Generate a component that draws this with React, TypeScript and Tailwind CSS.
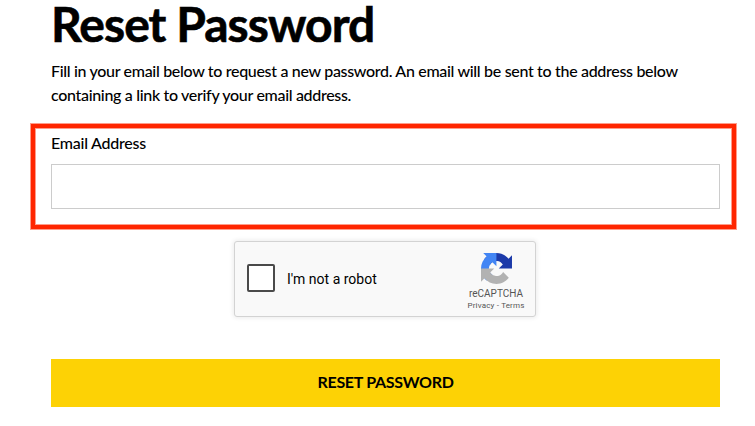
import { useState } from 'react'

function RecaptchaLogo() {
  return (
    <svg viewBox="0 0 64 64" className="h-[31px] w-[31px]" aria-hidden="true">
      <path
        fill="#1c3aa9"
        d="M64 31.955l-.033-1.37V4.687l-7.16 7.16C50.948 4.674 42.033.093 32.05.093c-10.4 0-19.622 4.96-25.458 12.64l11.736 11.86a15.55 15.55 0 0 1 4.754-5.334c2.05-1.6 4.952-2.906 8.968-2.906.485 0 .86.057 1.135.163 4.976.393 9.288 3.14 11.828 7.124l-8.307 8.307L64 31.953"
      />
      <path
        fill="#4285f4"
        d="M31.862.094l-1.37.033H4.594l7.16 7.16C4.58 13.147 0 22.06 0 32.046c0 10.4 4.96 19.622 12.64 25.458L24.5 45.768a15.55 15.55 0 0 1-5.334-4.754c-1.6-2.05-2.906-4.952-2.906-8.968 0-.485.057-.86.163-1.135.393-4.976 3.14-9.288 7.124-11.828l8.307 8.307L31.86.095"
      />
      <path
        fill="#b2b2b2"
        d="M.001 32.045l.033 1.37v25.898l7.16-7.16c5.86 7.173 14.774 11.754 24.76 11.754 10.4 0 19.622-4.96 25.458-12.64l-11.736-11.86a15.55 15.55 0 0 1-4.754 5.334c-2.05 1.6-4.952 2.906-8.968 2.906-.485 0-.86-.057-1.135-.163-4.976-.393-9.288-3.14-11.828-7.124l8.307-8.307c-10.522.04-22.4.066-27.295-.005"
      />
    </svg>
  )
}

function Recaptcha() {
  return (
    <div className="mt-3 ml-[234px] flex h-[76px] w-[302px] justify-between rounded-[3px] border border-[#d3d3d3] bg-[#f9f9f9] font-['Roboto',sans-serif] shadow-[0_0_4px_1px_rgba(0,0,0,0.08)]">
      <label className="flex items-start pt-[22px] pl-3">
        <input type="checkbox" className="h-7 w-7 appearance-none rounded-[2px] border-2 border-[#4a4a4a] bg-white" />
        <span className="mt-[7px] ml-3 text-[14px] leading-[17px] text-black">I'm not a robot</span>
      </label>
      <div className="mr-[9px] flex w-[60px] flex-col items-center pt-[11px] text-[#555]">
        <RecaptchaLogo />
        <div className="mt-[4px] text-[10px] leading-[12px]">reCAPTCHA</div>
        <div className="text-[8px] leading-[11px] tracking-[0.18px] whitespace-nowrap">Privacy - Terms</div>
      </div>
    </div>
  )
}

export default function App() {
  const [email, setEmail] = useState('')

  return (
    <main className="h-[426px] w-[755px] overflow-hidden bg-white font-['Lato',sans-serif] text-black">
      <h1 className="h-[59px] pl-[51px] text-[48px] leading-[48px] font-bold tracking-[-0.95px] whitespace-nowrap [-webkit-text-stroke:0.6px_black]">
        Reset Password
      </h1>
      <p className="h-16 pl-[51px] text-[16px] leading-6 font-medium tracking-[-0.32px] whitespace-nowrap">
        Fill in your email below to request a new password. An email will be sent to the address below
        <br />
        containing a link to verify your email address.
      </p>

      <section className="mt-px ml-[31px] h-[105px] w-[705px] border-4 border-[#ff2600] px-4 pt-[3px] shadow-[0_0_0_1px_#ff9c8a,inset_0_0_0_1px_#ff9c8a]">
        <label htmlFor="email" className="block h-[33px] text-[16px] leading-6 font-medium tracking-[-0.25px]">
          Email Address
        </label>
        <input
          id="email"
          type="email"
          value={email}
          onChange={(e) => setEmail(e.target.value)}
          className="block h-[45px] w-[669px] border border-[#ccc] bg-white px-3 outline-none"
        />
      </section>

      <Recaptcha />

      <button className="mt-[42px] ml-[51px] block h-12 w-[669px] bg-[#fdd205] pb-[2px] text-[16px] font-bold tracking-[-0.29px]">
        RESET PASSWORD
      </button>
    </main>
  )
}
